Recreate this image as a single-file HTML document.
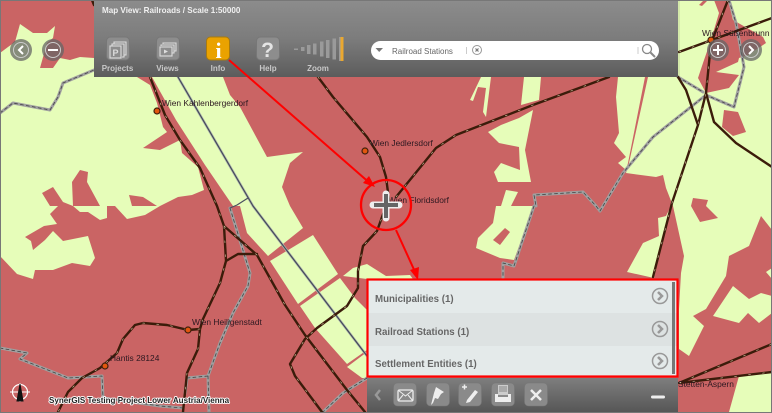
<!DOCTYPE html>
<html><head><meta charset="utf-8"><style>
html,body{margin:0;padding:0;width:772px;height:413px;overflow:hidden;background:#ca6464}
svg{display:block;font-family:"Liberation Sans",sans-serif;filter:blur(.3px)}
</style></head><body>
<svg width="772" height="413" viewBox="0 0 772 413" xmlns="http://www.w3.org/2000/svg">
<defs>
<linearGradient id="h" x1="0" y1="0" x2="0" y2="1"><stop offset="0" stop-color="#8c8c8c"/><stop offset=".5" stop-color="#7c7c7c"/><stop offset="1" stop-color="#5c5c5c"/></linearGradient>
<linearGradient id="b" x1="0" y1="0" x2="0" y2="1"><stop offset="0" stop-color="#7e7e7e"/><stop offset="1" stop-color="#565656"/></linearGradient>
</defs>
<rect width="772" height="413" fill="#ca6464"/>
<g fill="#e6fdb9">
<path d="M0 53L8 47 15 42 20 24 33 33 47 33 55 26 53 38 47 43 40 68 53 68 60 58 70 60 80 57 94 58 94 77 137 77 150 85 157 103 163 127 167 132 143 148 160 150 180 140 182 153 198 167 204 190 192 195 178 197 160 206H0Z"/>
<path d="M0 206H58L50 214 57 224 44 226 25 237 31 241 33 250 45 240 53 231 63 241 88 236 95 258 90 266 72 263 53 270 35 270 33 279 17 274 0 256Z"/>
<path d="M73 206H107V218L100 220 88 212 80 212Z"/>
<path d="M115 206H160L145 215 127 219Z"/>
<path d="M152 77H223L230 95 240 107 267 157 303 152 290 163 282 187 290 206 303 228 268 256 247 233 240 206 233 206 205 165 176 120Z"/>
<path d="M270 261L313 235 338 274 298 304Z"/>
<path d="M300 306L340 278 355 298 367 310V350L347 364 315 328Z"/>
<path d="M347 367L367 352V378H362Z"/>
<path d="M353 268L367 264 386 276 410 275 413 279H367L343 276Z"/>
<path d="M481 77H491L486 117 483 112 486 88 478 87 473 101 470 100Z"/>
<path d="M524 77H541L539 100 521 105Z"/>
<path d="M488 132L501 125 519 118 533 110 525 150 531 182H498L494 172 501 163 520 170 519 147 499 143Z"/>
<path d="M506 190L518 192 511 206H501Z"/>
<path d="M496 206H534L514 260 500 258 476 248 478 238 493 223Z"/>
<path d="M618 77H645L628 163 626 170 618 163 626 157 614 143 619 133 616 97Z"/>
<path d="M648 77H678V0H772V230L761 216 749 246 729 256 726 276 706 309 693 316 704 326 689 356 679 349V309L681 273 684 256 673 206 666 188 663 175 656 177 626 173 629 163Z"/>
<path d="M671 206L654 278 627 272 643 243 659 236 658 218 666 216Z"/>
<path d="M766 272L772 268V279Z"/>
<path d="M713 316L733 286 749 299 761 293 772 296V313L759 323 748 313 739 323Z"/>
<path d="M729 412L739 376 772 372V412Z"/>
</g>
<g fill="#ca6464">
<path d="M42 193L53 187 63 202 73 206H58L50 206Z"/>
<path d="M72 182L80 170 88 172 87 182 100 206H73Z"/>
<path d="M129 195L143 197 157 206H132Z"/>
<path d="M714 0H728L733 20 763 37 766 43 748 55 739 58 738 62 716 72 739 75 729 88 706 93 698 78 703 63 711 40 719 13Z"/>
<path d="M699 5L704 0H708L702 6Z"/>
<path d="M724 110L738 112 746 132 733 136 722 127Z"/>
<path d="M693 198L708 200 706 206 718 218 700 222 691 206Z"/>
<path d="M493 240L505 228 510 232 500 245Z"/>
</g>
<g fill="none" stroke-linecap="round" stroke-linejoin="round">
<path d="M0 113L13 103 50 110 58 97 63 83 94 70M230 208L250 273 248 286 233 313 220 343 208 376 187 378 185 393M208 376L209 412M0 348L27 353 20 359 68 378 102 376 103 398 160 406 183 408M367 378L343 393 323 412M706 95L653 137 623 173 603 206 600 211 596 206 583 192 534 195 536 206M534 206L514 266 503 263 503 278M729 0L736 23 744 67 734 107 706 95M678 77L703 92" stroke="#a0a0a0" stroke-width="3"/>
<path d="M0 113L13 103 50 110 58 97 63 83 94 70M230 208L250 273 248 286 233 313 220 343 208 376 187 378 185 393M208 376L209 412M0 348L27 353 20 359 68 378 102 376 103 398 160 406 183 408M367 378L343 393 323 412M706 95L653 137 623 173 603 206 600 211 596 206 583 192 534 195 536 206M534 206L514 266 503 263 503 278M729 0L736 23 744 67 734 107 706 95M678 77L703 92" stroke="#444" stroke-width=".8" stroke-dasharray="3 3"/>
<path d="M178 77L253 206 367 356" stroke="#b0b8b0" stroke-width="2.600"/>
<path d="M178 77L253 206 367 356" stroke="#444a58" stroke-width="1.200"/>
<path d="M230 208L237 205 248 198" stroke="#4a4f60" stroke-width="1.200"/>
<path d="M92 0L94 5M150 77L165 115 180 140 200 168 217 206 224 226 226 261 220 283 203 319 200 329 198 349 187 373 183 412M224 226L257 255 285 305 305 335 347 390 365 412M226 261L238 254 257 254M200 329L188 330 167 325 143 323 135 325 123 339 117 353 100 368 82 378 68 392 58 412M386 206L377 231 363 246 358 271 358 288 347 306 317 328 305 339 290 364 295 376 322 412M396 197L436 148 456 135 533 105 609 77M318 77L333 97 367 137 380 157 386 177 389 200M728 0L711 43 706 93 698 125 672 203 653 277M679 52L772 18M678 77L686 90 698 125M706 93L714 122 736 143 772 167M679 383L772 344M679 383L772 372" stroke="#3b1c0a" stroke-width="2.400"/>
<path d="M150 77L165 115 180 140 200 168 217 206 224 226 226 261 220 283 203 319 200 329 198 349 187 373 183 412M224 226L257 255 285 305 305 335 347 390 365 412M200 329L188 330 167 325 143 323 135 325 123 339 117 353 100 368 82 378 68 392 58 412M386 206L377 231 363 246 358 271 358 288 347 306 317 328 305 339 290 364 295 376 322 412M396 197L436 148 456 135 533 105 609 77M318 77L333 97 367 137 380 157 386 177 389 200M728 0L711 43 706 93 698 125 672 203 653 277M679 52L772 18M679 383L772 344M679 383L772 372" stroke="#d8c8a8" stroke-width=".6" stroke-dasharray="2 12"/>
</g>
<g fill="#e2560e" stroke="#40200c" stroke-width="1.200">
<circle cx="157" cy="111" r="3"/><circle cx="365" cy="151" r="3"/><circle cx="188" cy="330" r="3"/><circle cx="105" cy="366" r="3"/><circle cx="711" cy="40" r="3"/>
</g>
<g font-size="8.400" fill="#2c1820">
<text x="162" y="106">Wien Kahlenbergerdorf</text>
<text x="370" y="146">Wien Jedlersdorf</text>
<text x="388" y="203">Wien Floridsdorf</text>
<text x="192" y="325">Wien Heiligenstadt</text>
<text x="110" y="361">Hantis 28124</text>
<text x="702" y="36">Wien Süßenbrunn</text>
<text x="678" y="387">Stetten-Aspern</text>
</g>
<g>
<circle cx="21" cy="50" r="11" fill="#666" fill-opacity=".75"/><circle cx="21" cy="50" r="7.500" fill="none" stroke="#ccc" stroke-width="1"/><path d="M23 46L19 50 23 54" fill="none" stroke="#fff" stroke-width="2"/>
<circle cx="53" cy="50" r="11" fill="#666" fill-opacity=".75"/><circle cx="53" cy="50" r="7.500" fill="none" stroke="#ccc" stroke-width="1"/><path d="M48 50H58" stroke="#fff" stroke-width="2"/>
<circle cx="718" cy="50" r="11" fill="#666" fill-opacity=".75"/><circle cx="718" cy="50" r="7.500" fill="none" stroke="#ccc" stroke-width="1"/><path d="M713 50H723M718 45V55" stroke="#fff" stroke-width="2"/>
<circle cx="751" cy="50" r="11" fill="#666" fill-opacity=".75"/><circle cx="751" cy="50" r="7.500" fill="none" stroke="#ccc" stroke-width="1"/><path d="M749 46L753 50 749 54" fill="none" stroke="#fff" stroke-width="2"/>
</g>
<rect x="94" y="0" width="584" height="77" fill="url(#h)"/>
<rect x="678" y="0" width="2" height="77" fill="#000" opacity=".08"/>
<text x="102" y="13" font-size="8.100" font-weight="bold" fill="#f0f0f0">Map View: Railroads / Scale 1:50000</text>
<g>
<rect x="106.500" y="37" width="23" height="23" rx="4" fill="#8d8d8d" stroke="#777"/>
<rect x="156.500" y="37" width="23" height="23" rx="4" fill="#8d8d8d" stroke="#777"/>
<rect x="206.500" y="37" width="23" height="23" rx="4" fill="#eaa200" stroke="#a87a10"/>
<rect x="256.500" y="37" width="23" height="23" rx="4" fill="#8d8d8d" stroke="#777"/>
<g fill="none" stroke="#ddd" stroke-width="1.100">
<path d="M114 44V42H126V55H124M112 46V44H124V57H122"/><rect x="110" y="46" width="11" height="12" fill="#8d8d8d"/>
<path d="M163 44V43H176V51H174M161 46V45H174V53H172"/><rect x="160" y="47" width="12" height="9" fill="#8d8d8d"/>
</g>
<text x="115.500" y="56" font-size="9" font-weight="bold" fill="#ddd" text-anchor="middle">P</text>
<path d="M164 49.500L168 51.500 164 53.500Z" fill="#ddd"/>
<text x="218.500" y="58" font-size="22" font-weight="bold" fill="#fff" text-anchor="middle" font-family="Liberation Serif, serif">i</text>
<text x="267.500" y="57" font-size="21" font-weight="bold" fill="#e4e4e4" text-anchor="middle">?</text>
</g>
<g font-size="8" font-weight="bold" fill="#c8c8c8" text-anchor="middle">
<text x="117.500" y="71">Projects</text>
<text x="167.500" y="71">Views</text>
<text x="218" y="71">Info</text>
<text x="268" y="71">Help</text>
<text x="318" y="71">Zoom</text>
</g>
<g fill="#9a9a9a">
<rect x="294" y="48.500" width="4" height="1.500"/><rect x="301" y="47" width="3.500" height="4"/><rect x="307" y="45" width="3.500" height="9"/><rect x="313" y="43.500" width="3.500" height="11"/><rect x="320" y="41.500" width="3.500" height="15"/><rect x="326" y="40" width="3.500" height="18"/><rect x="332.500" y="38.500" width="3.500" height="21"/><rect x="339" y="37" width="1.500" height="24"/>
<rect x="340.500" y="37" width="3" height="24" fill="#eaa830"/>
</g>
<rect x="371" y="41" width="288" height="19" rx="9.500" fill="#fff"/>
<path d="M375.500 48H383L379.200 52Z" fill="#777"/>
<text x="392" y="54" font-size="8" fill="#666">Railroad Stations</text>
<path d="M466.500 47V54M638 47V54" stroke="#ccc"/>
<circle cx="477" cy="50" r="4.500" fill="none" stroke="#999"/><path d="M475.500 48.500L478.500 51.500M478.500 48.500L475.500 51.500" stroke="#777" stroke-width="1.200"/>
<circle cx="647" cy="49" r="4.500" fill="none" stroke="#888" stroke-width="1.300"/><path d="M650.500 52.500L655 57" stroke="#888" stroke-width="2"/>
<g fill="none" stroke="#f00">
<path d="M229 60L372 185" stroke-width="2"/>
<circle cx="386" cy="205" r="25" stroke-width="2.300"/>
<path d="M396 230L416 274" stroke-width="2"/>
</g>
<path d="M375 187L363 183 369 176Z" fill="#f00"/>
<path d="M418 280L410 270 419 267Z" fill="#f00"/>
<path d="M386 194V218M373 205H399" stroke="#eee" stroke-width="7" stroke-linecap="round"/>
<path d="M386 194V218M374 205H398" stroke="#666" stroke-width="4"/>
<rect x="367" y="279" width="311" height="35" fill="#e4eaea"/>
<rect x="367" y="313" width="311" height="33" fill="#dde2e2"/>
<rect x="367" y="346" width="311" height="30" fill="#e4eaea"/>
<rect x="672" y="282" width="3" height="92" fill="#777"/>
<rect x="367.500" y="279.500" width="310" height="97" fill="none" stroke="#f00" stroke-width="2.200"/>
<g font-size="9.700" font-weight="bold" fill="#666">
<text x="375" y="302">Municipalities (1)</text>
<text x="375" y="335">Railroad Stations (1)</text>
<text x="375" y="367">Settlement Entities (1)</text>
</g>
<g fill="none" stroke="#999">
<circle cx="660" cy="296" r="7.500" stroke-width="1.500"/><path d="M658 292L662 296 658 300" stroke-width="2.500"/>
<circle cx="660" cy="329" r="7.500" stroke-width="1.500"/><path d="M658 325L662 329 658 333" stroke-width="2.500"/>
<circle cx="660" cy="361" r="7.500" stroke-width="1.500"/><path d="M658 357L662 361 658 365" stroke-width="2.500"/>
</g>
<rect x="367" y="378" width="311" height="34" fill="url(#b)"/>
<path d="M380 390L376 395 380 400" fill="none" stroke="#999" stroke-width="2.500"/>
<g fill="#8a8a8a" stroke="#777" stroke-width=".6">
<rect x="393.500" y="383" width="23" height="23" rx="4"/><rect x="426.500" y="383" width="23" height="23" rx="4"/><rect x="458.500" y="383" width="23" height="23" rx="4"/><rect x="491.500" y="383" width="23" height="23" rx="4"/><rect x="524.500" y="383" width="23" height="23" rx="4"/>
</g>
<rect x="398" y="390" width="15" height="11" rx="1.500" fill="none" stroke="#eee" stroke-width="1.300"/><path d="M398 390L405.500 396 413 390M398 401L403 395M413 401L408 395" fill="none" stroke="#eee"/>
<path d="M436 387L444 392 441 394 438 399 435 398 433 403 431 405 433 397 434 393Z" fill="#eee"/>
<path d="M462 387H467M464.500 384.500V389.500" stroke="#eee" stroke-width="1.500"/>
<path d="M467 400L475 390 478 392 470 402 466 403Z" fill="#eee"/>
<rect x="498" y="385" width="10" height="10" fill="#ccc"/><path d="M499 387H507M499 389H507M499 391H507" stroke="#888"/>
<path d="M495 394H498V397H508V394H511V402H495Z" fill="#eee"/>
<path d="M531 390L541 400M541 390L531 400" stroke="#eee" stroke-width="2.500"/>
<rect x="651" y="395.500" width="14" height="3" rx="1.500" fill="#eee"/>
<g stroke="#fff" fill="none">
<circle cx="20" cy="392" r="7.500" stroke-width="1.200"/><path d="M10 392H30M20 383V402" stroke-width="1"/>
<path d="M20 384L23 401H17Z" fill="#111" stroke="#111"/>
</g>
<text x="49" y="403" font-size="8.050" font-weight="bold" fill="#222" stroke="#fff" stroke-width="1.800" paint-order="stroke" stroke-linejoin="round">SynerGIS Testing Project Lower Austria/Vienna</text>
<rect x=".5" y=".5" width="771" height="412" fill="none" stroke="#777" stroke-width="1"/>
</svg>
</body></html>
